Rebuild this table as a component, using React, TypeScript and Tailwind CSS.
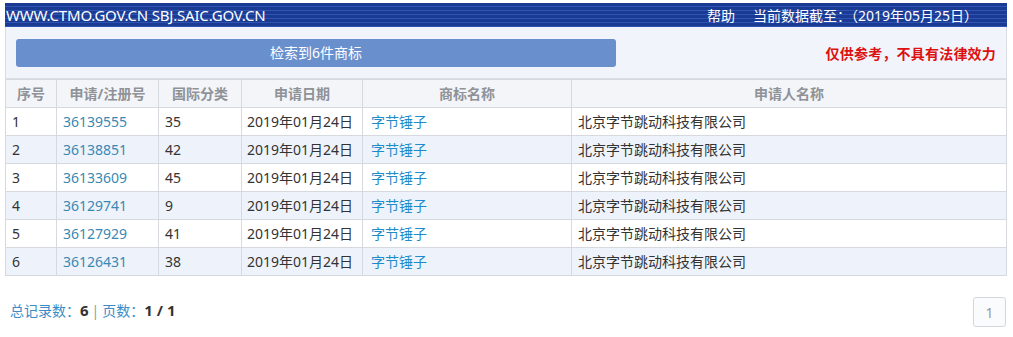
import React from "react";

const rows = [
  ["1", "36139555", "35"],
  ["2", "36138851", "42"],
  ["3", "36133609", "45"],
  ["4", "36129741", "9"],
  ["5", "36127929", "41"],
  ["6", "36126431", "38"],
];

const font = { fontFamily: '"Microsoft YaHei", "Noto Sans", "Noto Sans CJK SC", sans-serif' };

export default function App() {
  return (
    <div className="w-[1013px] h-[337px] bg-white overflow-hidden" style={font}>
      <div className="pt-[3px] px-[5px] pr-[6px]">
        <div
          className="h-[24px] flex items-center justify-between text-white text-[14px] px-[1px]"
          style={{
            background:
              "repeating-linear-gradient(180deg, #1a3a94 0px, #1a3a94 3px, #2f55b4 3px, #2f55b4 4px)",
          }}
        >
          <span className="text-[15px] tracking-[-0.2px]">WWW.CTMO.GOV.CN SBJ.SAIC.GOV.CN</span>
          <div className="flex items-center gap-[18px] pr-[28px]">
            <span>帮助</span>
            <span>当前数据截至：（2019年05月25日）</span>
          </div>
        </div>
        <div className="h-[52px] bg-[#f1f5fb] border-x border-b border-[#d9dde3] flex items-center justify-between pl-[10px] pr-[10px]">
          <div className="w-[600px] h-[28px] rounded-[3px] bg-[#6a8fcd] text-white text-[14px] flex items-center justify-center">
            检索到6件商标
          </div>
          <span className="text-[#dd1111] text-[14px] font-bold pt-[2px] tracking-[0.2px]">仅供参考，不具有法律效力</span>
        </div>
        <table className="w-full border-collapse text-[14px] text-[#333]">
          <colgroup>
            <col className="w-[51px]" />
            <col className="w-[102px]" />
            <col className="w-[83px]" />
            <col className="w-[121px]" />
            <col className="w-[209px]" />
            <col />
          </colgroup>
          <thead>
            <tr className="h-[28px] bg-[#f3f5f9] text-[#8f9297]">
              {["序号", "申请/注册号", "国际分类", "申请日期", "商标名称", "申请人名称"].map((h) => (
                <th key={h} className="border border-[#d6d9de] font-bold text-center">
                  {h}
                </th>
              ))}
            </tr>
          </thead>
          <tbody>
            {rows.map((r, i) => (
              <tr key={r[0]} className={`h-[28px] ${i % 2 === 1 ? "bg-[#eef3fb]" : "bg-white"}`}>
                <td className="border border-[#d6d9de] px-[6px]">{r[0]}</td>
                <td className="border border-[#d6d9de] px-[6px] text-[#3a88b4]">{r[1]}</td>
                <td className="border border-[#d6d9de] px-[6px]">{r[2]}</td>
                <td className="border border-[#d6d9de] px-[5px]">2019年01月24日</td>
                <td className="border border-[#d6d9de] px-[8px] text-[#1e8ccb]">字节锤子</td>
                <td className="border border-[#d6d9de] px-[6px]">北京字节跳动科技有限公司</td>
              </tr>
            ))}
          </tbody>
        </table>
        <div className="flex items-center justify-between mt-[21px]">
          <div className="pl-[5px] mb-[4px] text-[14px] flex items-center">
            <span className="text-[#3b8bc6]">总记录数：</span>
            <span className="font-bold text-[#333] text-[15px]">6</span>
            <span className="text-[#999] mx-[3px]">|</span>
            <span className="text-[#3b8bc6]">页数：</span>
            <span className="font-bold text-[#333] text-[15px]">1 / 1</span>
          </div>
          <div className="w-[33px] h-[30px] border border-[#d4d7dc] rounded-[3px] bg-[#fafbfc] text-[#999] text-[14px] flex items-center justify-center mr-[1px]">
            1
          </div>
        </div>
      </div>
    </div>
  );
}
